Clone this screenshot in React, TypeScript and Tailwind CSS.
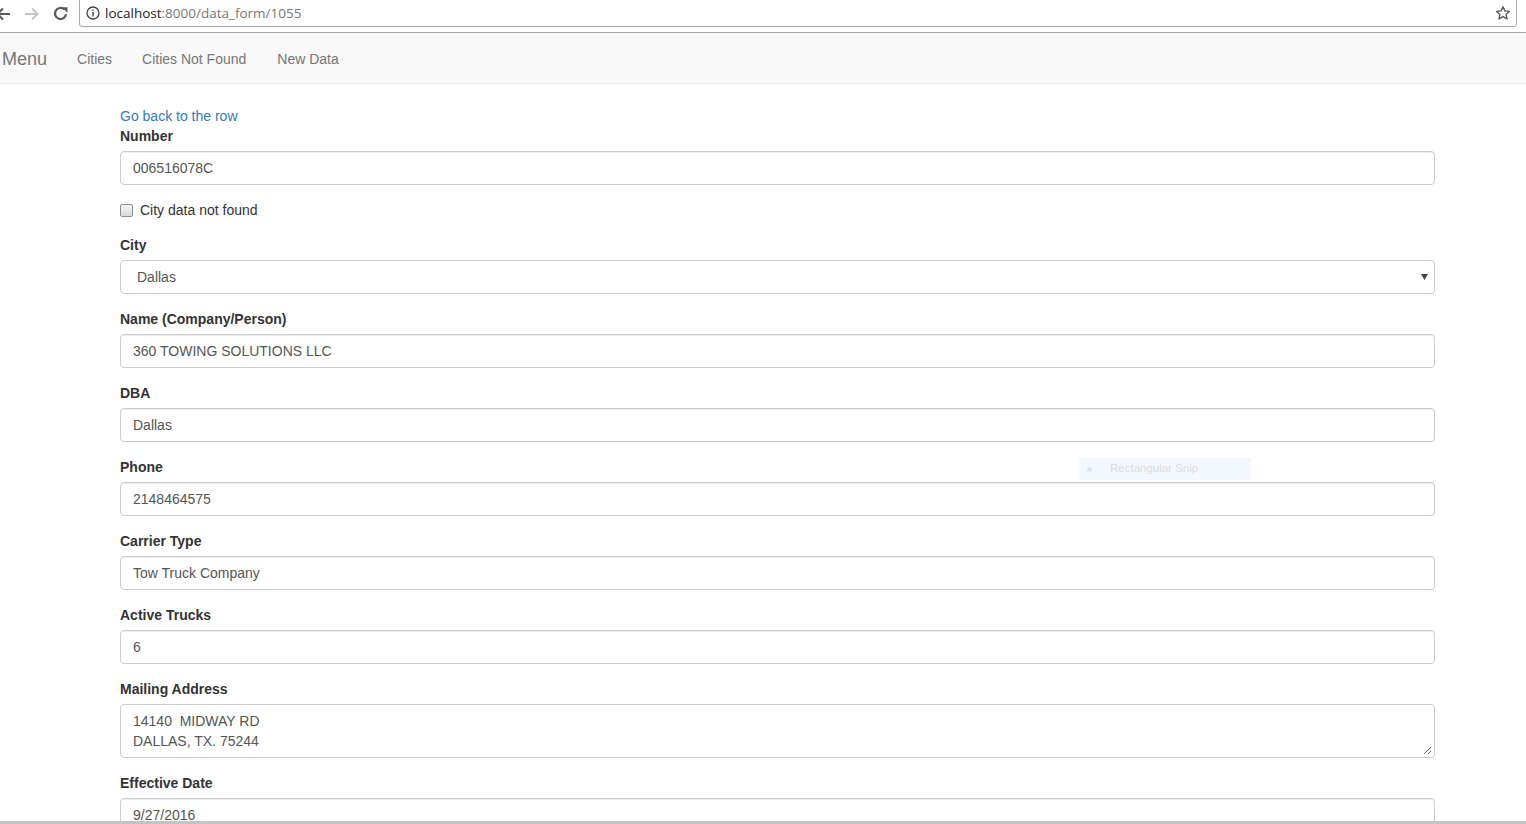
import React from "react";

const font = { fontFamily: '"Liberation Sans", Arial, sans-serif' };

function Field({ label, value }: { label: string; value: string }) {
  return (
    <div className="mb-[15px]">
      <div className="text-[14px] leading-[20px] font-bold text-[#333] mb-[5px]">{label}</div>
      <div className="h-[34px] border border-[#ccc] rounded-[4px] px-[12px] flex items-center text-[14px] text-[#555] bg-white shadow-[inset_0_1px_1px_rgba(0,0,0,0.075)]">
        {value}
      </div>
    </div>
  );
}

export default function App() {
  return (
    <div className="w-[1526px] h-[824px] overflow-hidden bg-white relative" style={font}>
      {/* Browser toolbar */}
      <div className="h-[33px] bg-white border-b border-[#a8a8a8] flex items-start relative">
        <div className="w-[79px] h-[28px] flex items-center relative">
          {/* back */}
          <svg className="absolute left-[-5px] top-[6px]" width="16" height="16" viewBox="0 0 16 16">
            <path d="M15 8H2.5M8 2.5L2.5 8l5.5 5.5" stroke="#5a5a5a" strokeWidth="2" fill="none" />
          </svg>
          {/* forward */}
          <svg className="absolute left-[24px] top-[6px]" width="16" height="16" viewBox="0 0 16 16">
            <path d="M1 8h12.5M8 2.5L13.5 8 8 13.5" stroke="#c4c4c4" strokeWidth="2" fill="none" />
          </svg>
          {/* reload */}
          <svg className="absolute left-[52px] top-[5px]" width="17" height="17" viewBox="0 0 16 16">
            <path d="M13.2 8.5a5.2 5.2 0 1 1-1.6-4.3" stroke="#5a5a5a" strokeWidth="2.1" fill="none" />
            <path d="M9.3 2h5.2v5.2z" fill="#5a5a5a" />
          </svg>
        </div>
        <div className="flex-1 mr-[9px] h-[28px] mt-[-1px] border border-[#a9a9a9] rounded-b-[3px] bg-white flex items-center pl-[6px] relative">
          <svg width="14" height="14" viewBox="0 0 14 14" className="mr-[5px]">
            <circle cx="7" cy="7" r="6" stroke="#444" strokeWidth="1.3" fill="none" />
            <rect x="6.3" y="6" width="1.4" height="4.5" fill="#444" />
            <rect x="6.3" y="3.5" width="1.4" height="1.4" fill="#444" />
          </svg>
          <span className="text-[#222]" style={{ fontFamily: '"Open Sans", "Noto Sans", sans-serif', fontSize: "13.5px" }}>
            localhost<span className="text-[#777]">:8000/data_form/1055</span>
          </span>
          <svg className="absolute right-[5px] top-[5px]" width="16" height="16" viewBox="0 0 24 24">
            <path d="M12 2.5l2.9 6.3 6.9.7-5.2 4.6 1.5 6.8L12 17.4l-6.1 3.5 1.5-6.8-5.2-4.6 6.9-.7z" stroke="#555" strokeWidth="2" fill="none" strokeLinejoin="round" />
          </svg>
        </div>
      </div>

      {/* Navbar */}
      <div className="h-[51px] bg-[#f8f8f8] border-b border-[#e7e7e7] flex items-center pt-[3px]">
        <span className="ml-[2px] text-[18px] text-[#777]">Menu</span>
        <span className="ml-[30px] text-[14px] text-[#777]">Cities</span>
        <span className="ml-[30px] text-[14px] text-[#777]">Cities Not Found</span>
        <span className="ml-[31px] text-[14px] text-[#777]">New Data</span>
      </div>

      {/* Form */}
      <div className="ml-[120px] w-[1315px] pt-[22px]">
        <div className="text-[14px] leading-[20px] text-[#337ab7]">Go back to the row</div>
        <Field label="Number" value="006516078C" />
        <div className="flex items-center h-[20px] mb-[15px] text-[14px] text-[#333]">
          <span className="w-[13px] h-[13px] border border-[#8f8f8f] rounded-[2px] bg-gradient-to-b from-[#f4f4f4] to-[#dcdcdc] mr-[7px]" />
          City data not found
        </div>
        <div className="mb-[15px]">
          <div className="text-[14px] leading-[20px] font-bold text-[#333] mb-[5px]">City</div>
          <div className="h-[34px] border border-[#ccc] rounded-[4px] pl-[16px] pr-[6px] flex items-center justify-between text-[14px] text-[#555] bg-white">
            <span>Dallas</span>
            <svg width="7" height="6" viewBox="0 0 7 6">
              <path d="M0 0h7L3.5 6z" fill="#444" />
            </svg>
          </div>
        </div>
        <Field label="Name (Company/Person)" value="360 TOWING SOLUTIONS LLC" />
        <Field label="DBA" value="Dallas" />
        <Field label="Phone" value="2148464575" />
        <Field label="Carrier Type" value="Tow Truck Company" />
        <Field label="Active Trucks" value="6" />
        <div className="mb-[15px]">
          <div className="text-[14px] leading-[20px] font-bold text-[#333] mb-[5px]">Mailing Address</div>
          <div className="h-[54px] border border-[#ccc] rounded-[4px] px-[12px] py-[6px] text-[14px] leading-[20px] text-[#555] bg-white relative">
            <div>14140&nbsp; MIDWAY RD</div>
            <div>DALLAS, TX. 75244</div>
            <svg className="absolute right-[2px] bottom-[2px]" width="9" height="9" viewBox="0 0 9 9">
              <path d="M8 1L1 8M8 5L5 8" stroke="#666" strokeWidth="1" />
            </svg>
          </div>
        </div>
        <Field label="Effective Date" value="9/27/2016" />
      </div>

      {/* Snip overlay */}
      <div className="absolute left-[1079px] top-[458px] w-[172px] h-[22px] bg-[#f3f8ff] flex items-center text-[11.5px] text-[#dcdcdc]">
        <span className="ml-[8px] w-[5px] h-[5px] bg-[#dde6f2] rounded-full" />
        <span className="ml-[18px]">Rectangular Snip</span>
      </div>

      {/* bottom edge */}
      <div className="absolute left-0 bottom-0 w-full h-[3px] bg-[#c4c4c4]" />
    </div>
  );
}
